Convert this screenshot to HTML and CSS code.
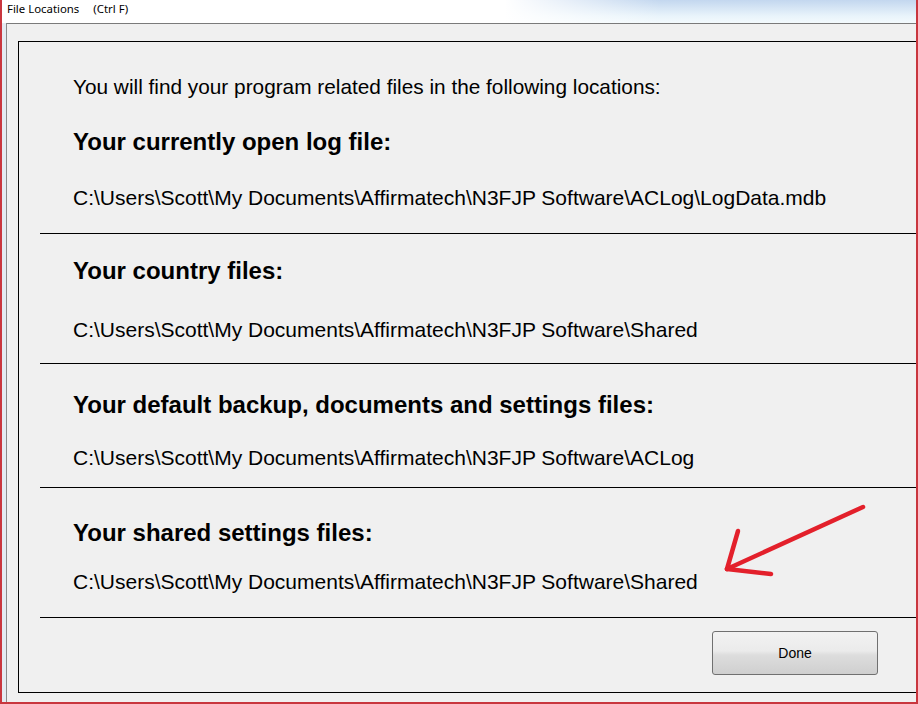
FILE: index.html
```html
<!DOCTYPE html>
<html>
<head>
  <title>File Locations</title>
  <link rel="stylesheet" href="styles.css">
</head>
<body>
<div class="window">
  <div class="titlebar">
    <span class="title">File Locations</span>
    <span class="shortcut">(Ctrl F)</span>
  </div>
  <div class="frame">
    <div class="box">
      <div class="section sec-log">
        <p class="intro">You will find your program related files in the following locations:</p>
        <h2>Your currently open log file:</h2>
        <p class="path">C:\Users\Scott\My Documents\Affirmatech\N3FJP Software\ACLog\LogData.mdb</p>
      </div>
      <div class="section sec-country">
        <h2>Your country files:</h2>
        <p class="path">C:\Users\Scott\My Documents\Affirmatech\N3FJP Software\Shared</p>
      </div>
      <div class="section sec-backup">
        <h2>Your default backup, documents and settings files:</h2>
        <p class="path">C:\Users\Scott\My Documents\Affirmatech\N3FJP Software\ACLog</p>
      </div>
      <div class="section sec-shared">
        <h2>Your shared settings files:</h2>
        <p class="path">C:\Users\Scott\My Documents\Affirmatech\N3FJP Software\Shared</p>
      </div>
      <div class="footer">
        <button class="done">Done</button>
      </div>

      <!-- red annotation arrow drawn over the dialog -->
      <svg class="arrow" width="160" height="90" viewBox="0 0 160 90">
        <g fill="none" stroke="#e3202b" stroke-width="4.5" stroke-linecap="round" stroke-linejoin="round">
          <path d="M154 8 L18 70"/>
          <path d="M18 70 L29 32"/>
          <path d="M18 70 L62 75"/>
        </g>
      </svg>
    </div>
  </div>
</div>
</body>
</html>
```

FILE: styles.css
```css
body {
  margin: 0;
  background: #ffffff;
}
.window {
  width: 914px;
  height: 702px;
  border-left: 2px solid #c9363e;
  border-right: 2px solid #c9363e;
  border-bottom: 2px solid #c9363e;
  background: #e4eaf1;
  overflow: hidden;
}
.titlebar {
  height: 23px;
  box-sizing: border-box;
  padding: 2px 0 0 5px;
  font-family: "Noto Sans", "Open Sans", sans-serif;
  font-size: 11.4px;
  line-height: 14px;
  color: #000;
  background: linear-gradient(to right, #ffffff 55%, rgba(255,255,255,0) 72%),
              linear-gradient(#c3d7ef, #e9f4fb 70%, #f3fafd);
}
.shortcut {
  margin-left: 11px;
}
.frame {
  margin-left: 4px;
  height: 679px;
  border-top: 1px solid #7a7a7a;
  border-left: 1px solid #8a8a8a;
  background: #f0f0f0;
  overflow: hidden;
}
.box {
  position: relative;
  margin: 17px 0 0 11px;
  width: 920px;
  height: 650px;
  border: 1px solid #000;
  font-family: "Liberation Sans", Arial, sans-serif;
  color: #000;
}
.section {
  margin-left: 21px;
  padding-left: 33px;
  border-bottom: 1px solid #000;
}
.section p,
.section h2 {
  margin: 0;
  line-height: 30px;
  white-space: nowrap;
}
.intro {
  font-size: 20.8px;
}
h2 {
  font-size: 24px;
  font-weight: bold;
}
.path {
  font-size: 21px;
}
.sec-log {
  padding-top: 30px;
  padding-bottom: 20px;
}
.sec-log h2 {
  margin-top: 25px;
}
.sec-log .path {
  margin-top: 26px;
}
.sec-country {
  padding-top: 22px;
  padding-bottom: 18px;
}
.sec-country .path {
  margin-top: 29px;
}
.sec-backup {
  padding-top: 26px;
  padding-bottom: 14px;
}
.sec-backup .path {
  margin-top: 23px;
}
.sec-shared {
  padding-top: 30px;
  padding-bottom: 20px;
}
.sec-shared .path {
  margin-top: 19px;
}
.footer {
  margin-left: 21px;
  padding-top: 13px;
}
.done {
  margin-left: 672px;
  width: 166px;
  height: 44px;
  border: 1px solid #707070;
  border-radius: 3px;
  background: linear-gradient(#f2f2f2, #ebebeb 45%, #dddddd 55%, #cfcfcf);
  font-family: "Liberation Sans", Arial, sans-serif;
  font-size: 14px;
  color: #000;
}
.arrow {
  position: absolute;
  left: 690px;
  top: 457px;
}
```
